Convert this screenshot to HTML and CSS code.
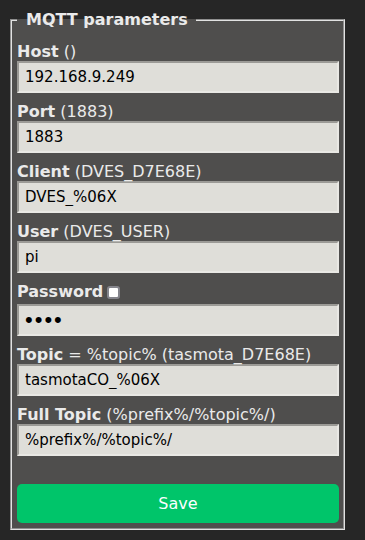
FILE: index.html
```html
<!DOCTYPE html>
<html lang="en">
<head>
  <meta charset="UTF-8">
  <meta name="viewport" content="width=device-width, initial-scale=1.0">
  <title>MQTT parameters</title>
  <link rel="stylesheet" href="styles.css">
</head>
<body>
  <div class="page">
    <fieldset class="box">
      <legend>MQTT parameters</legend>

      <div class="field">
        <label><b>Host</b> ()</label>
        <input type="text" value="192.168.9.249">
      </div>

      <div class="field">
        <label><b>Port</b> (1883)</label>
        <input type="text" value="1883">
      </div>

      <div class="field">
        <label><b>Client</b> (DVES_D7E68E)</label>
        <input type="text" value="DVES_%06X">
      </div>

      <div class="field">
        <label><b>User</b> (DVES_USER)</label>
        <input type="text" value="pi">
      </div>

      <div class="field">
        <label class="pw"><b>Password</b><input type="checkbox" class="show"></label>
        <input type="password" value="1234">
      </div>

      <div class="field">
        <label><b>Topic</b> = %topic% (tasmota_D7E68E)</label>
        <input type="text" value="tasmotaCO_%06X">
      </div>

      <div class="field">
        <label><b>Full Topic</b> (%prefix%/%topic%/)</label>
        <input type="text" value="%prefix%/%topic%/">
      </div>

      <button class="save">Save</button>
    </fieldset>
  </div>
</body>
</html>
```

FILE: styles.css
```css
body {
  font-family: 'DejaVu Sans', Verdana, sans-serif;
  background: #262626;
  color: #eaeaea;
  margin: 0;
  padding: 0;
}

.page {
  padding: 10px 0 0 10px;
}

.box {
  width: 335px;
  box-sizing: border-box;
  margin: 0;
  padding: 0 4px 5px 5px;
  background: #4f4e4d;
  border: 2px groove #e2e2e2;
  min-width: 0;
}

.box legend {
  font-size: 16px;
  font-weight: bold;
  line-height: 19px;
  padding: 0 8px 0 9px;
}

.field {
  margin-top: 10px;
}

.box legend + .field {
  margin-top: 14px;
}

.field label {
  display: block;
  font-size: 16px;
  line-height: 18px;
}

.field label.pw {
  height: 21px;
}

.show {
  appearance: none;
  -webkit-appearance: none;
  width: 13px;
  height: 13px;
  box-sizing: border-box;
  margin: 3px 3px 3px 4px;
  vertical-align: -5px;
  background: #fff;
  border: 2px solid #85858c;
  border-radius: 3px;
}

.field input[type=text],
.field input[type=password] {
  display: block;
  width: 100%;
  height: 32px;
  box-sizing: border-box;
  margin: 0;
  padding: 0 6px;
  font-family: 'DejaVu Sans', Verdana, sans-serif;
  font-size: 15px;
  color: #000;
  background: #dfded9;
  border-style: solid;
  border-width: 2px;
  border-color: #9b9a96 #e9e8e4 #e9e8e4 #9b9a96;
  outline: none;
}

.field input[type=password] {
  font-family: 'Liberation Sans', Arial, sans-serif;
  font-size: 22px;
  letter-spacing: 2px;
}

.save {
  display: block;
  width: 100%;
  height: 39px;
  margin-top: 28px;
  border: 0;
  border-radius: 5px;
  background: #00c56a;
  color: #faffff;
  font-family: 'DejaVu Sans', Verdana, sans-serif;
  font-size: 16px;
  cursor: pointer;
}
```
